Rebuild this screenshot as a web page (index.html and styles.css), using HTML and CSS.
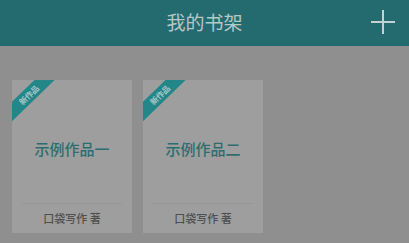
FILE: index.html
```html
<!DOCTYPE html>
<html lang="zh">
<head>
<meta charset="utf-8">
<title>我的书架</title>
<link rel="stylesheet" href="styles.css">
</head>
<body>
<header class="topbar">
  <span class="spacer"></span>
  <h1 class="title">我的书架</h1>
  <span class="add" aria-label="添加">
    <svg width="24" height="24" viewBox="0 0 24 24"><path d="M12 0V24M0 12H24" stroke="currentColor" stroke-width="2" fill="none"/></svg>
  </span>
</header>
<main class="shelf">
  <div class="book">
    <div class="ribbon"><span>新作品</span></div>
    <div class="book-main"><span class="book-title">示例作品一</span></div>
    <div class="book-foot">口袋写作 著</div>
  </div>
  <div class="book">
    <div class="ribbon"><span>新作品</span></div>
    <div class="book-main"><span class="book-title">示例作品二</span></div>
    <div class="book-foot">口袋写作 著</div>
  </div>
</main>
</body>
</html>
```
FILE: styles.css
```css
html, body {
  margin: 0;
  padding: 0;
}
body {
  width: 409px;
  height: 243px;
  background: #8f8f8f;
  font-family: "Noto Sans CJK SC", "Noto Sans", sans-serif;
  overflow: hidden;
}
.topbar {
  height: 46px;
  background: #246b70;
  display: grid;
  grid-template-columns: 1fr auto 1fr;
  align-items: center;
  padding: 0 14px;
  box-sizing: border-box;
}
.title {
  margin: 0;
  font-size: 19px;
  font-weight: 400;
  color: #b6c7c7;
  line-height: 1;
  padding-bottom: 4px;
}
.add {
  justify-self: end;
  color: #c6d1d1;
  display: flex;
  padding-bottom: 3px;
}
.shelf {
  display: flex;
  gap: 11px;
  padding: 34px 12px 0;
}
.book {
  position: relative;
  overflow: hidden;
  width: 120px;
  height: 153px;
  background: #9e9e9e;
  display: flex;
  flex-direction: column;
}
.ribbon {
  position: absolute;
  left: -14px;
  top: 8px;
  width: 62px;
  height: 14px;
  background: #23878a;
  transform: rotate(-44deg);
  display: flex;
  align-items: center;
  justify-content: center;
}
.ribbon span {
  font-size: 8px;
  font-weight: 700;
  line-height: 1;
  color: #a6c6c6;
  white-space: nowrap;
}
.book-main {
  height: 123px;
  box-sizing: border-box;
  padding-top: 13px;
  display: flex;
  align-items: center;
  justify-content: center;
}
.book-title {
  font-size: 15px;
  color: #2d6d6f;
  font-weight: 500;
  line-height: 1;
}
.book-foot {
  flex: 1;
  margin: 0 10px;
  border-top: 1px solid #969696;
  display: flex;
  align-items: center;
  justify-content: center;
  font-size: 11px;
  font-weight: 500;
  color: #4f4f4f;
  line-height: 1;
}
```
